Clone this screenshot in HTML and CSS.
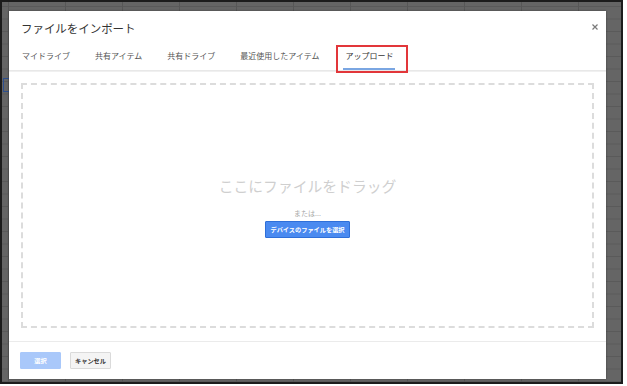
FILE: index.html
```html
<!DOCTYPE html>
<html lang="ja">
<head>
<meta charset="utf-8">
<link rel="stylesheet" href="styles.css">
</head>
<body>
<div class="frame">
  <div class="sheet-cell"></div>
  <div class="dialog">
    <div class="dlg-head">
      <div class="title-row">
        <span class="title">ファイルをインポート</span>
        <svg class="close" width="6" height="6" viewBox="0 0 6 6"><path d="M0.5 0.5L5.5 5.5M5.5 0.5L0.5 5.5" stroke="#7a7a7a" stroke-width="1.2"/></svg>
      </div>
      <div class="tabs">
        <span class="tab">マイドライブ</span>
        <span class="tab">共有アイテム</span>
        <span class="tab">共有ドライブ</span>
        <span class="tab">最近使用したアイテム</span>
        <span class="tab active">アップロード</span>
      </div>
    </div>
    <div class="head-shadow"></div>
    <div class="dlg-body">
      <div class="dropzone">
        <div class="drag-text">ここにファイルをドラッグ</div>
        <div class="or-text">または...</div>
        <button class="pick-btn">デバイスのファイルを選択</button>
      </div>
    </div>
    <div class="dlg-foot">
      <button class="btn btn-select">選択</button>
      <button class="btn btn-cancel">キャンセル</button>
    </div>
  </div>
</div>
</body>
</html>
```
FILE: styles.css
```css
html, body {
  margin: 0;
  padding: 0;
  background: #ffffff;
  font-family: "Noto Sans CJK JP", "Noto Sans", sans-serif;
}

.frame {
  position: relative;
  box-sizing: border-box;
  width: 623px;
  height: 384px;
  border: 2px solid #1c1c1c;
  padding: 9px 0 0 7px;
  background-color: #656565;
  background-image:
    linear-gradient(to right, #575757 0, #575757 1px, transparent 1px),
    linear-gradient(to bottom, #5a5a5a 0, #5a5a5a 1px, transparent 1px);
  background-size: 57px 100%, 100% 12.5px;
  background-position: 6px 0, 0 4px;
}

.sheet-cell {
  position: absolute;
  left: 1px;
  top: 76px;
  width: 8px;
  height: 12px;
  border: 1px solid #2d4f8f;
}

.dialog {
  position: relative;
  width: 597px;
  height: 368px;
  background: #ffffff;
  box-shadow: 0 0 2px rgba(0, 0, 0, 0.35);
  display: flex;
  flex-direction: column;
}

.dlg-head {
  height: 59px;
  display: flex;
  flex-direction: column;
}

.title-row {
  display: flex;
  align-items: center;
  justify-content: space-between;
  padding: 5px 8px 5px 12px;
  height: 24px;
}

.title {
  font-size: 11.5px;
  line-height: 14px;
  color: #333;
  letter-spacing: -0.05px;
}

.close {
  display: block;
  margin-top: -2px;
}

.tabs {
  display: flex;
  gap: 25px;
  padding-left: 13px;
  height: 25px;
  box-sizing: border-box;
}

.tab {
  position: relative;
  font-size: 8px;
  line-height: 10px;
  padding-top: 6px;
  color: #555;
  white-space: nowrap;
}

.tab.active {
  color: #333;
  margin-left: 1px;
}

.tab.active::before {
  content: "";
  position: absolute;
  left: -2px;
  right: -2px;
  bottom: 0;
  height: 2px;
  background: #7aa6e2;
}

.tab.active::after {
  content: "";
  position: absolute;
  left: -9px;
  right: -15px;
  top: 0;
  bottom: -3px;
  border: 2px solid #e2363a;
}

.head-shadow {
  height: 2px;
  background: linear-gradient(to bottom, #e4e4e4, #f4f4f4);
}

.dlg-body {
  padding: 11px 12px 13px 12px;
  border-bottom: 1px solid #ebebeb;
}

.dropzone {
  box-sizing: border-box;
  height: 245px;
  border: 2px dashed #dcdcdc;
  display: flex;
  flex-direction: column;
  align-items: center;
  justify-content: center;
}

.drag-text {
  font-size: 14.8px;
  line-height: 20px;
  color: #cfcfcf;
  margin-top: 2px;
}

.or-text {
  font-size: 7px;
  line-height: 10px;
  color: #a8a8a8;
  margin-top: 12px;
}

.pick-btn {
  margin-top: 3px;
  height: 17px;
  width: 85px;
  padding: 0;
  border: 1px solid #2f6fd8;
  border-radius: 1px;
  background: #4a8af0;
  color: #fff;
  font-family: inherit;
  font-size: 6.2px;
  font-weight: 700;
  line-height: 15px;
}

.dlg-foot {
  display: flex;
  gap: 9px;
  padding: 10px 11px;
}

.btn {
  height: 17px;
  width: 41px;
  padding: 0;
  border-radius: 1px;
  font-family: inherit;
  font-size: 6.2px;
  font-weight: 700;
  line-height: 15px;
}

.btn-select {
  border: 1px solid #a9c8fa;
  background: #a9c8fa;
  color: #fff;
}

.btn-cancel {
  border: 1px solid #dadada;
  background: #f4f4f4;
  color: #333;
}
```
